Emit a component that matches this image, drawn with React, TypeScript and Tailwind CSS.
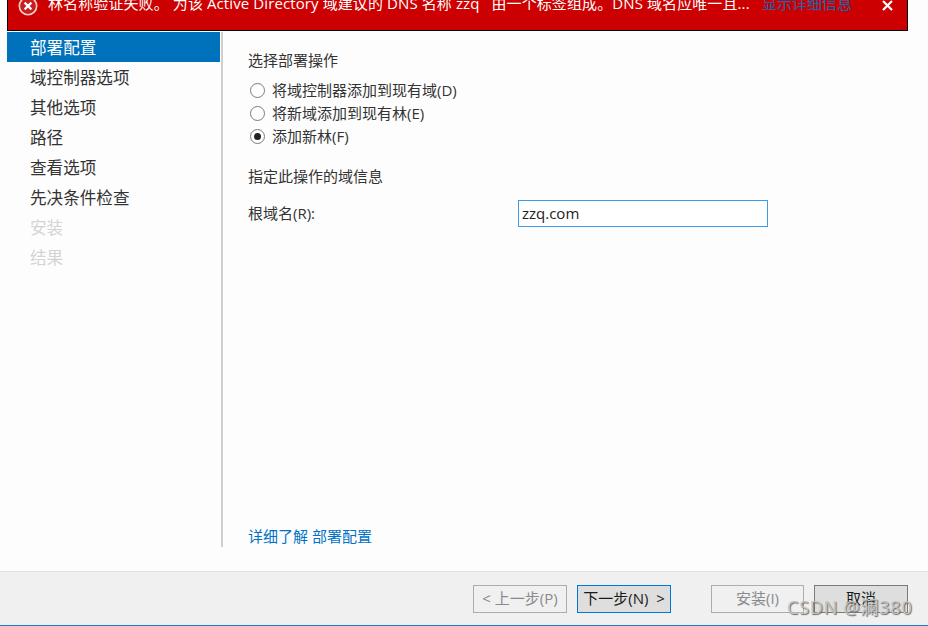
import React from "react";

const FONT = "font-['Open_Sans','Noto_Sans_CJK_SC',sans-serif]";

const steps = ["域控制器选项", "其他选项", "路径", "查看选项", "先决条件检查"];
const disabledSteps = ["安装", "结果"];

const Radio = ({ label, checked }: { label: string; checked?: boolean }) => (
  <div className="flex h-[23.4px] items-center gap-[7px]">
    <span className="flex h-[15px] w-[15px] items-center justify-center rounded-full border border-[#7a7a7a] bg-white">
      {checked && <span className="h-[7px] w-[7px] rounded-full bg-[#222]" />}
    </span>
    <span className="text-[15px] leading-none text-[#333]">{label}</span>
  </div>
);

const Button = ({ label, className }: { label: string; className: string }) => (
  <div className={`flex h-[28px] items-center justify-center whitespace-pre border pb-[2px] text-[15px] leading-none ${className}`}>
    {label}
  </div>
);

export default function App() {
  return (
    <div className={`relative flex h-[626px] w-[928px] flex-col overflow-hidden bg-[#fdfdfd] ${FONT}`}>
      {/* --- ERROR BANNER --- */}
      <div className="ml-[7px] flex h-[31px] w-[901px] shrink-0 items-center overflow-hidden border-r border-b border-l border-black bg-[#cc0000] pb-[24px] text-[15px] leading-none text-white">
        <svg className="ml-[10px] mt-[5px] shrink-0" width="20" height="20" viewBox="0 0 20 20" fill="none">
          <circle cx="10" cy="10" r="8.7" stroke="#f3d0d0" strokeWidth="1.6" fill="#c81e1e" />
          <path d="M6.6 6.6l6.8 6.8M13.4 6.6l-6.8 6.8" stroke="#fff" strokeWidth="2.2" />
        </svg>
        <span className="ml-[10px] w-[714px] shrink-0 whitespace-pre tracking-[0.1px]">林名称验证失败。 为该 Active Directory 域建议的 DNS 名称 zzq   由一个标签组成。DNS 域名应唯一且...</span>
        <span className="shrink-0 text-[#1666b0]">显示详细信息</span>
        <svg className="ml-[30px] mt-[4px] shrink-0" width="11" height="11" viewBox="0 0 11 11" fill="none">
          <path d="M1 1l9 9M10 1l-9 9" stroke="#fff" strokeWidth="2.2" />
        </svg>
      </div>

      {/* --- BODY --- */}
      <div className="flex flex-1">
        <div className="ml-[7px] mt-px h-[515px] w-[216px] shrink-0 border-r-2 border-[#cfcfcf] pr-px">
          <div className="flex h-[30px] items-center bg-[#0072bc] pt-[2px] pl-[23px] text-[16.6px] leading-none text-white">
            部署配置
          </div>
          {steps.map((step) => (
            <div key={step} className="flex h-[30px] items-center pt-[3px] pl-[23px] text-[16.6px] leading-none text-[#333]">
              {step}
            </div>
          ))}
          {disabledSteps.map((step) => (
            <div key={step} className="flex h-[30px] items-center pt-[3px] pl-[23px] text-[16.6px] leading-none text-[#d4d4d4]">
              {step}
            </div>
          ))}
        </div>

        <div className="ml-[25px] flex h-[515px] flex-1 flex-col pt-[20px] text-[#333]">
          <div className="text-[15px] leading-[18px]">选择部署操作</div>
          <div className="mt-[9.5px] ml-[2px] flex flex-col">
            <Radio label="将域控制器添加到现有域(D)" />
            <Radio label="将新域添加到现有林(E)" />
            <Radio label="添加新林(F)" checked />
          </div>
          <div className="mt-[18.5px] text-[15px] leading-[18px]">指定此操作的域信息</div>
          <div className="mt-[15px] flex items-center">
            <span className="w-[270px] text-[15px] leading-none">根域名(R):</span>
            <div className="flex h-[27px] w-[250px] items-center border border-[#3d9be9] bg-white pl-[3px] text-[15px] leading-none text-[#222]">
              zzq.com
            </div>
          </div>
          <div className="mt-auto pb-px text-[15px] leading-[18px] text-[#0072c6]">详细了解 部署配置</div>
        </div>
      </div>

      {/* --- FOOTER --- */}
      <div className="flex h-[55px] shrink-0 items-start border-t border-t-[#e3e3e3] border-b border-b-[#1f7cc4] bg-[#f0f0f0] pl-[473px] pt-[13px]">
        <Button label="< 上一步(P)" className="w-[94px] border-[#adadad] text-[#8a8a8a]" />
        <Button label="下一步(N)  >" className="ml-[10px] w-[94px] border-[#0078d7] bg-[#dedede] text-[#1a1a1a]" />
        <Button label="安装(I)" className="ml-[40px] w-[93px] border-[#adadad] text-[#8a8a8a]" />
        <Button label="取消" className="ml-[10px] w-[94px] border-[#7a7a7a] bg-[#dedede] text-[#1a1a1a]" />
      </div>

      {/* watermark */}
      <div className="absolute left-[787px] top-[596px] text-[18px] leading-[22px] tracking-[0.8px] text-[#c4c4c4] [text-shadow:1px_1px_1px_#666]">
        CSDN @澜380
      </div>
    </div>
  );
}
